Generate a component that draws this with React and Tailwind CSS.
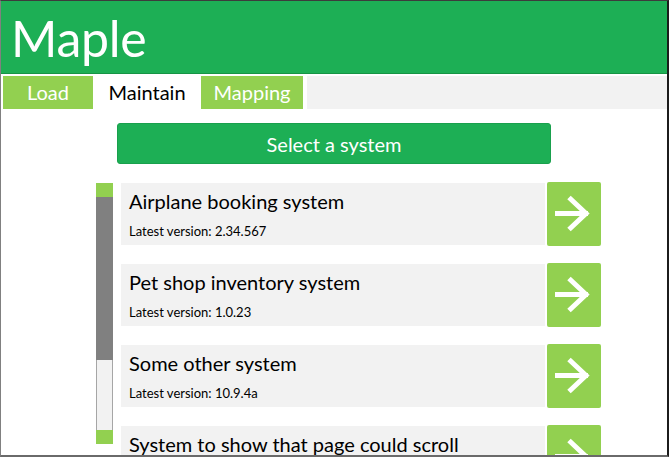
const systems = [
  { name: "Airplane booking system", version: "2.34.567" },
  { name: "Pet shop inventory system", version: "1.0.23" },
  { name: "Some other system", version: "10.9.4a" },
  { name: "System to show that page could scroll", version: "0.0.1" },
];

function Arrow() {
  return (
    <svg width="54" height="64" viewBox="0 0 54 64" fill="none">
      <path d="M8 31.5H41" stroke="white" strokeWidth="5" />
      <path d="M22 15.5L39 31.5L22 47.5" stroke="white" strokeWidth="5" />
    </svg>
  );
}

export default function App() {
  return (
    <div className="w-[671px] h-[458px] bg-white overflow-hidden" style={{ fontFamily: "Lato, 'Open Sans', sans-serif" }}>
      <div className="w-[669px] h-[457px] border-t border-l border-t-[#3c3c3c] border-l-[#808080] border-r-2 border-r-[#1c1c1c] border-b-2 border-b-[#6a6a6a] overflow-hidden flex flex-col">
        <header className="h-[73px] shrink-0 bg-[#1daf55] border-b border-[#169444] flex items-center pl-[10px]">
          <h1 className="text-white text-[50px] leading-none tracking-[-0.3px] mt-[2px]">Maple</h1>
        </header>

        <nav className="mt-[2px] h-[33px] shrink-0 flex bg-[#f2f2f2]">
          <div className="flex bg-white pl-[2px] pr-[4px]">
            <button className="w-[90px] bg-[#92d050] text-white text-[20px] leading-none pb-[1px]">Load</button>
            <button className="w-[108px] bg-white text-black text-[20px] leading-none pb-[1px]">Maintain</button>
            <button className="w-[102px] bg-[#92d050] text-white text-[20px] leading-none pb-[1px]">Mapping</button>
          </div>
        </nav>

        <main className="flex flex-col">
          <div className="pl-[116px] pt-[14px]">
            <button className="w-[434px] h-[41px] rounded-[3px] bg-[#1daf55] border border-[#19a04d] text-white text-[20px] leading-none">
              Select a system
            </button>
          </div>

          <div className="flex pl-[95px] pt-[18px] gap-[8px]">
            <div className="w-[17px] h-[261px] mt-[1px] flex flex-col shrink-0">
              <div className="h-[14px] bg-[#92d050]" />
              <div className="h-[163px] bg-[#808080]" />
              <div className="flex-1 bg-[#f2f2f2] border-x border-[#a6a6a6]" />
              <div className="h-[14px] bg-[#92d050]" />
            </div>

            <div className="flex flex-col gap-[17px]">
              {systems.map((s) => (
                <div key={s.name} className="flex items-center gap-[2px] h-[64px]">
                  <div className="w-[424px] h-[62px] bg-[#f2f2f2] pl-[8px] pt-[5px]">
                    <div className="text-[20px] leading-[26px] text-black">{s.name}</div>
                    <div className="text-[13px] leading-[16px] mt-[9px] text-black">Latest version: {s.version}</div>
                  </div>
                  <button className="w-[54px] h-[64px] rounded-[2px] bg-[#92d050] flex items-center justify-center">
                    <Arrow />
                  </button>
                </div>
              ))}
            </div>
          </div>
        </main>
      </div>
    </div>
  );
}
